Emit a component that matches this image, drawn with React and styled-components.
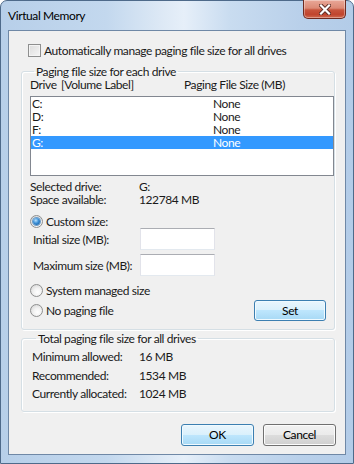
import styled, { createGlobalStyle } from "styled-components";

const Global = createGlobalStyle`
  html, body {
    margin: 0;
    padding: 0;
    background: #ffffff;
  }
  body {
    font-family: "Segoe UI", Lato, "Noto Sans", sans-serif;
    font-size: 12px;
    letter-spacing: -0.4px;
    color: #1a1a1a;
  }
  * { box-sizing: border-box; }
`;

const Frame = styled.div`
  width: 354px;
  height: 464px;
  display: flex;
  flex-direction: column;
  padding: 0 7px 8px;
  border: 1px solid #4e6a8a;
  border-radius: 7px 7px 0 0;
  background: linear-gradient(
    90deg,
    #b7cfe9 0%,
    #c3d8ee 30%,
    #dce8f5 45%,
    #e6eff9 52%,
    #c9dcf0 65%,
    #b9d0ea 85%,
    #b3cce8 100%
  );
`;

const TitleBar = styled.div`
  height: 29px;
  display: flex;
  justify-content: space-between;
  align-items: flex-start;
`;

const Title = styled.span`
  margin-top: 7px;
  color: #000;
  font-size: 12px;
  line-height: 15px;
`;

const CloseBtn = styled.div`
  width: 43px;
  height: 19px;
  margin-top: -1px;
  margin-right: 0;
  display: flex;
  align-items: center;
  justify-content: center;
  border: 1px solid #6e2a20;
  border-top: none;
  border-radius: 0 0 5px 5px;
  background: linear-gradient(
    #e9a898 0%,
    #dc8a76 45%,
    #c8553d 55%,
    #c0452e 80%,
    #d06a50 100%
  );
  box-shadow: inset 0 0 0 1px rgba(255, 255, 255, 0.35);
`;

const Client = styled.div`
  flex: 1;
  display: flex;
  flex-direction: column;
  padding: 12px 10px 0 12px;
  background: #f0f0f0;
  border: 1px solid #6f88a6;
`;

const CheckRow = styled.label`
  display: flex;
  align-items: center;
  gap: 2px;
  height: 15px;
  margin-left: 7px;
`;

const CheckBox = styled.span`
  width: 13px;
  height: 13px;
  border: 1px solid #8e8f8f;
  background: linear-gradient(135deg, #dcdcdc, #f5f5f5);
  box-shadow: inset 0 0 0 1px #f4f4f4;
  margin-right: 1px;
`;

const Group = styled.fieldset`
  margin: ${(p) => p.$top}px 0 0;
  padding: ${(p) => p.$pad};
  min-width: 0;
  border: 1px solid #d5dfe5;
  border-radius: 3px;
  box-shadow: inset 1px 1px 0 #ffffff, 1px 1px 0 #ffffff;
`;

const Legend = styled.legend`
  margin-left: 4px;
  padding: 0 2px;
  line-height: 15px;
`;

const HeaderRow = styled.div`
  display: grid;
  grid-template-columns: 31px 123px 1fr;
  height: 13px;
  line-height: 13px;
  margin-top: -1px;
`;

const ListBox = styled.div`
  height: 80px;
  margin-top: 5px;
  border: 1px solid #828790;
  background: #ffffff;
`;

const ListRow = styled.div`
  display: grid;
  grid-template-columns: 181px 1fr;
  height: 13px;
  line-height: 13px;
  padding-left: 1px;
  overflow: hidden;
  background: ${(p) => (p.$selected ? "#3399ff" : "transparent")};
  color: ${(p) => (p.$selected ? "#ffffff" : "#1a1a1a")};
`;

const InfoRow = styled.div`
  display: grid;
  grid-template-columns: ${(p) => p.$label}px 1fr;
  height: ${(p) => p.$h}px;
  line-height: ${(p) => p.$h}px;
  padding-left: ${(p) => p.$indent || 0}px;
  margin-top: ${(p) => p.$top || 0}px;
`;

const RadioRow = styled.div`
  display: flex;
  align-items: center;
  justify-content: space-between;
  height: ${(p) => p.$h || 13}px;
  margin-top: ${(p) => p.$top}px;
  margin-right: 8px;
`;

const RadioLabel = styled.label`
  display: flex;
  align-items: center;
  gap: 3px;
`;

const Radio = styled.span`
  width: 13px;
  height: 13px;
  border-radius: 50%;
  border: 1px solid #8e8f8f;
  background: radial-gradient(circle at 60% 65%, #ffffff 0%, #f2f2f2 40%, #cfcfcf 100%);
  display: flex;
  align-items: center;
  justify-content: center;
  &::after {
    content: "";
    display: ${(p) => (p.$checked ? "block" : "none")};
    width: 7px;
    height: 7px;
    border-radius: 50%;
    background: radial-gradient(circle at 40% 35%, #b8e2ff 0%, #3b8fd6 45%, #0c4f94 100%);
    box-shadow: 0 0 0 1px #6c9cc7;
  }
`;

const FieldRow = styled.div`
  display: flex;
  align-items: center;
  height: 22px;
  margin-top: ${(p) => p.$top}px;
  padding-left: 3px;
`;

const FieldLabel = styled.label`
  width: 107px;
`;

const TextBox = styled.div`
  width: 75px;
  height: 22px;
  background: #ffffff;
  border: 1px solid #e2e3ea;
  border-top-color: #abadb3;
  border-bottom-color: #e3e9ef;
`;

const Button = styled.button`
  width: ${(p) => p.$w || 73}px;
  height: ${(p) => p.$h || 22}px;
  font: inherit;
  letter-spacing: inherit;
  color: #000;
  border: 1px solid ${(p) => (p.$accent ? "#3c7fb1" : "#707070")};
  border-radius: 3px;
  background: ${(p) =>
    p.$accent
      ? "linear-gradient(#eaf6fd 0%, #d9f0fc 50%, #bee6fd 50%, #a7d9f5 100%)"
      : "linear-gradient(#f2f2f2 0%, #ebebeb 50%, #dddddd 50%, #cfcfcf 100%)"};
  box-shadow: inset 0 0 0 1px ${(p) => (p.$accent ? "#f0faff" : "#fcfcfc")};
  padding: 0;
`;

const ButtonBar = styled.div`
  display: flex;
  justify-content: flex-end;
  gap: 9px;
  margin-top: 12px;
  margin-right: -1px;
`;

const drives = [
  { d: "C:", size: "None" },
  { d: "D:", size: "None" },
  { d: "F:", size: "None" },
  { d: "G:", size: "None", selected: true },
];

const totals = [
  ["Minimum allowed:", "16 MB"],
  ["Recommended:", "1534 MB"],
  ["Currently allocated:", "1024 MB"],
];

const CloseIcon = () => (
  <svg width="12" height="11" viewBox="0 0 12 11">
    <path d="M2 1.5 L10 9.5 M10 1.5 L2 9.5" stroke="#5b2a22" strokeWidth="4" strokeLinecap="square" />
    <path d="M2 1.5 L10 9.5 M10 1.5 L2 9.5" stroke="#ffffff" strokeWidth="2.2" strokeLinecap="square" />
  </svg>
);

export default function App() {
  return (
    <>
      <Global />
      <Frame>
        <TitleBar>
          <Title>Virtual Memory</Title>
          <CloseBtn>
            <CloseIcon />
          </CloseBtn>
        </TitleBar>
        <Client>
          <CheckRow>
            <CheckBox />
            Automatically manage paging file size for all drives
          </CheckRow>

          <Group $top={6} $pad="0 0 8px 8px">
            <Legend>Paging file size for each drive</Legend>
            <HeaderRow>
              <span>Drive</span>
              <span>[Volume Label]</span>
              <span>Paging File Size (MB)</span>
            </HeaderRow>
            <ListBox>
              {drives.map((r) => (
                <ListRow key={r.d} $selected={r.selected}>
                  <span>{r.d}</span>
                  <span>{r.size}</span>
                </ListRow>
              ))}
            </ListBox>
            <InfoRow $label={109} $h={13} $top={4}>
              <span>Selected drive:</span>
              <span>G:</span>
            </InfoRow>
            <InfoRow $label={109} $h={13}>
              <span>Space available:</span>
              <span>122784 MB</span>
            </InfoRow>

            <RadioRow $top={9}>
              <RadioLabel>
                <Radio $checked />
                Custom size:
              </RadioLabel>
            </RadioRow>
            <FieldRow $top={0}>
              <FieldLabel>Initial size (MB):</FieldLabel>
              <TextBox />
            </FieldRow>
            <FieldRow $top={4}>
              <FieldLabel>Maximum size (MB):</FieldLabel>
              <TextBox />
            </FieldRow>
            <RadioRow $top={8}>
              <RadioLabel>
                <Radio />
                System managed size
              </RadioLabel>
            </RadioRow>
            <RadioRow $top={3} $h={21}>
              <RadioLabel>
                <Radio />
                No paging file
              </RadioLabel>
              <Button $accent $w={72} $h={21}>
                Set
              </Button>
            </RadioRow>
          </Group>

          <Group $top={1} $pad="2px 0 7px 10px">
            <Legend>Total paging file size for all drives</Legend>
            {totals.map(([k, v]) => (
              <InfoRow key={k} $label={107} $h={18.5}>
                <span>{k}</span>
                <span>{v}</span>
              </InfoRow>
            ))}
          </Group>

          <ButtonBar>
            <Button $accent>OK</Button>
            <Button>Cancel</Button>
          </ButtonBar>
        </Client>
      </Frame>
    </>
  );
}
